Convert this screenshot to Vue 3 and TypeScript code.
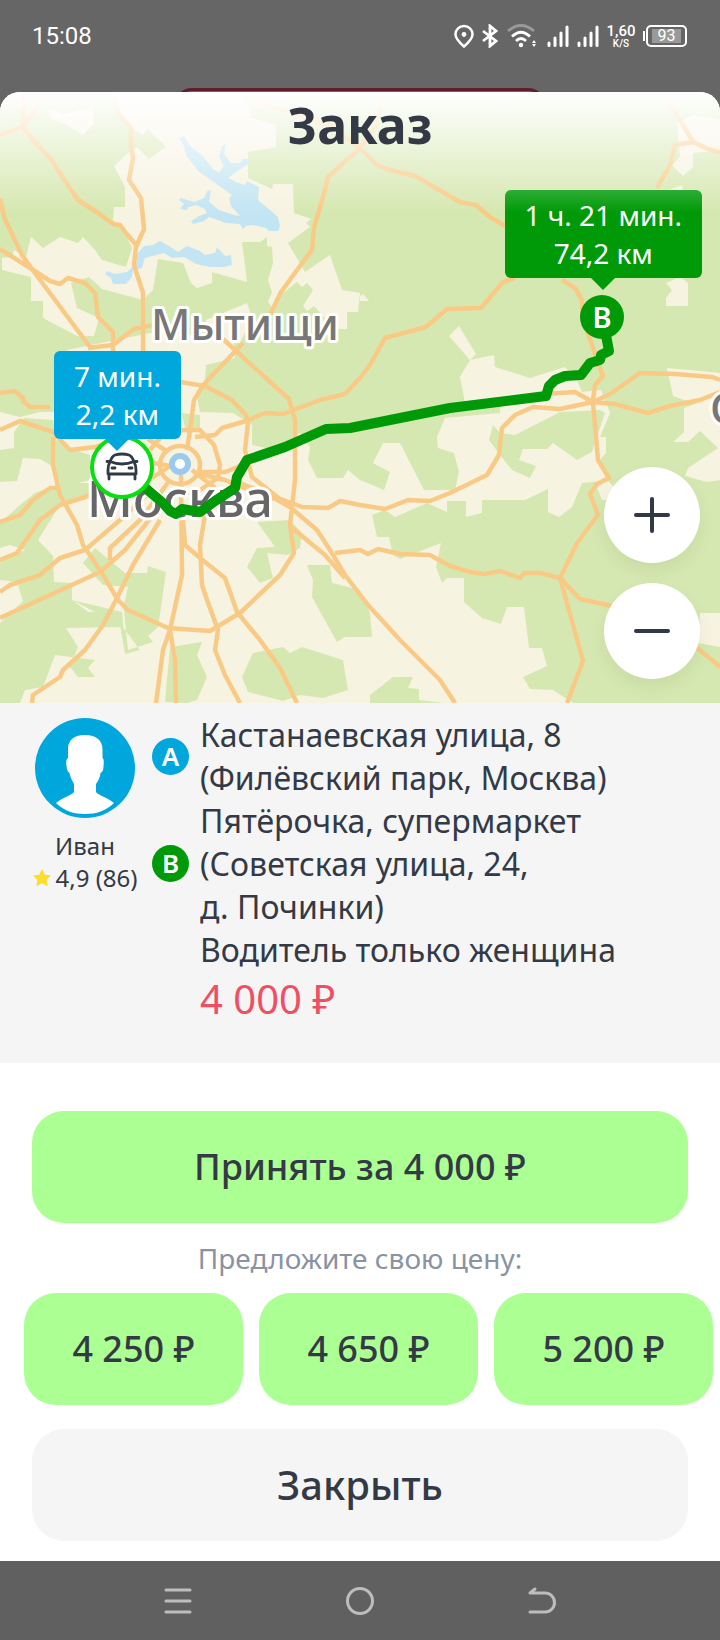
<script setup lang="ts">
interface Stop { id: string; letter: string; lines: string[] }

const woodlandGaps: string[] = [
  '113,92 117,107 130,127 143,135 148,129 166,147 149,159 137,147 128,153 114,166 125,187 125,207 114,207 113,220 122,227 132,248 126,267 102,260 95,250 83,237 78,243 60,237 43,248 31,237 26,257 14,250 12,257 2,258 2,270 31,277 31,301 43,301 43,318 77,336 94,336 99,318 77,308 71,283 89,277 102,289 143,300 153,290 158,259 183,263 191,283 197,288 212,283 212,272 247,282 242,242 260,242 267,237 267,246 272,247 273,263 268,280 272,292 268,302 273,308 283,293 297,282 302,287 307,283 313,290 303,306 307,311 314,306 335,329 347,329 347,312 358,312 360,293 342,290 330,255 305,272 288,243 310,227 306,223 311,219 294,213 293,184 273,184 272,189 248,178 248,152 276,147 276,125 252,118 247,103 233,92',
  '48,108 63,114 93,107 94,124 83,135 67,125 50,118',
  '206,320 247,303 252,318 240,343 206,343',
  '67,350 150,333 233,336 235,358 206,365 205,380 196,392 200,412 233,413 252,425 252,445 276,450 300,433 310,447 308,460 317,478 343,478 348,470 360,480 384,490 390,472 373,463 383,443 400,443 424,490 455,490 459,472 454,453 438,448 437,437 445,418 477,415 500,413 500,405 465,403 460,377 470,360 449,336 459,326 476,354 470,360 494,355 495,367 530,378 565,367 577,380 582,392 601,390 610,413 600,437 606,437 606,453 600,460 610,480 582,483 572,507 559,517 548,512 548,489 525,500 482,500 482,513 466,517 466,501 447,501 447,512 427,503 395,517 385,510 372,515 377,537 389,537 393,555 400,559 441,543 436,567 442,583 447,578 464,578 464,602 482,618 501,624 507,607 524,607 529,648 542,648 547,666 523,677 530,689 553,690 573,703 0,703 0,412 20,417 40,412 54,412',
  '684,408 720,395 720,480 707,482 685,476 688,468 718,448 700,431 688,442 673,442 684,432',
  '667,368 720,373 720,405 690,402 673,396',
  '666,283 680,277 688,283 688,306 666,306 666,298 672,290',
  '700,613 720,613 720,647 698,643',
  '677,123 693,115 720,120 720,150 693,153 693,167 683,176 672,165 680,157',
  '668,190 682,185 683,192 668,195',
  '360,296 363,294 369,301 360,301',
  '597,487 607,480 614,487 612,500 602,500'
]

const woodland: string[] = [
  '493,425 500,433 515,435 560,412 600,410 605,413 592,452 577,460 553,443 547,449 523,449 519,460 536,466 530,478 512,470 500,455 489,440',
  '0,450 14,448 14,432 24,418 53,420 56,440 75,450 90,455 90,480 62,487 52,466 40,459 23,458 17,481 0,482',
  '181,413 200,415 200,430 187,434',
  '0,523 20,505 35,493 62,483 95,483 85,500 63,500 38,540 53,556 54,582 72,583 72,600 88,612 122,612 123,627 66,628 78,647 70,667 78,677 95,677 88,668 95,660 55,655 43,687 25,690 20,703 0,703 0,623 23,601 17,582 0,580 0,560 25,550 10,545 0,548',
  '72,600 122,612 123,600 128,650 153,642 148,636 158,627 162,600 166,572 148,566 147,573 125,573 95,548 83,563 103,585 128,587 122,612 123,627 140,650 125,654 120,625',
  '170,647 202,642 197,655 207,677 197,700 187,703 165,702',
  '253,653 283,647 290,653 302,647 343,660 348,690 323,698 300,695 283,701 248,692 242,677',
  '257,548 275,547 257,522 290,520 302,533 300,548 288,555 267,553 273,578 260,583 247,567',
  '307,565 330,565 332,583 360,590 370,613 372,637 345,637 337,642 312,597 313,580',
  '370,695 393,677 413,677 408,688 419,689 419,700 443,703 370,703'
]

const water: string[] = [
  '179,138 184,136 191,147 202,155 213,169 223,175 236,182 245,185 247,181 259,187 258,200 278,217 280,226 278,231 269,231 266,228 253,225 246,226 243,229 240,224 226,223 218,220 209,217 204,221 193,224 191,221 199,216 207,213 205,209 196,205 188,207 187,210 180,209 184,204 179,200 181,198 194,202 204,198 208,190 211,191 209,202 219,210 234,215 240,216 231,206 229,198 232,195 215,183 198,171 186,155 184,146',
  '222,146 226,144 224,154 231,163 240,163 243,159 249,159 248,164 236,172 228,178 216,176 224,166 219,157',
  '137,254 144,246 153,245 160,241 169,246 178,252 187,246 200,251 205,255 215,253 217,247 225,256 231,255 232,265 224,267 210,267 196,264 184,257 172,258 164,253 145,258 142,268 133,270 132,277 126,284 113,284 111,278 105,274 107,271 115,274 127,272 137,262'
]

const roads: string[] = [
  'M25,93 L22,127 L0,135', 'M42,95 L34,112 L22,127 L36,143 L53,162 L63,178 L78,200 L98,213 L113,224 L120,225 L126,233 L137,246',
  'M115,97 L118,113 L131,128 L131,147 L133,158 L129,180 L141,198 L144,229 L136,247 L134,265 L143,293 L143,355',
  'M0,198 L4,217 L22,255 L32,269 L90,347', 'M0,249 L27,266 L50,281 L60,284 L68,278 L85,283 L95,293 L98,317 L113,332 L113,352',
  'M88,348 L113,345 L134,329 L153,325', 'M249,100 L330,125 L360,148 L328,177 L325,190 L314,228 L312,250 L300,266 L281,292 L270,315',
  'M382,100 L376,125 L360,148 L377,165 L390,170 L415,176 L460,202 L476,205 L490,217 L505,226',
  'M223,339 L290,400', 'M243,343 L225,362 L205,383 L194,400 L190,430 L187,450', 'M180,382 L205,386 L232,400 L246,415 L248,423',
  'M195,437 L215,435 L222,428 L246,421 L265,413 L283,414 L320,400 L345,394 L360,378 L370,365 L385,338 L400,334 L426,327 L447,309 L481,308 L503,282 L515,278',
  'M562,280 L575,288 L582,300 L583,320 L592,345 L596,357 L603,376 L595,385 L593,400',
  'M545,394 L575,392 L593,402 L610,394 L640,373 L675,374 L712,377 L720,380',
  'M720,392 L700,400 L670,406 L648,413 L615,404 L593,402 L560,409 L533,407 L515,415 L502,428 L499,455 L487,475 L450,493 L430,501 L408,500 L385,509 L360,505 L340,501 L328,508 L302,507 L270,495 L232,480',
  'M593,402 L598,460 L609,478 L597,484 L590,494 L598,515 L577,543 L560,578 L540,573 L524,573 L520,578 L500,571 L485,574 L470,572 L450,566 L430,555 L400,554 L378,549 L368,554 L360,550 L335,553',
  'M560,578 L580,599 L612,606', 'M560,578 L583,661 L567,703', 'M697,648 L712,660 L720,667',
  'M272,497 L290,507 L317,530 L330,550 L345,575 L368,605 L400,640 L440,680 L455,703',
  'M667,98 L693,142 L706,148 L720,153', 'M693,142 L675,145 L670,165 L657,188',
  'M53,437 L53,465 L60,495 L77,525 L83,545 L100,570 L118,600 L128,610 L168,628 L210,631 L240,613 L280,575 L294,553 L290,525 L295,480 L295,420 L288,396',
  'M150,450 L165,432 L185,430 L200,430 L214,445 L220,465 L218,478 L200,490 L175,495', 'M160,465 a20,19 0 1 0 40,0 a20,19 0 1 0 -40,0',
  'M148,439 L168,452', 'M148,462 L170,466 L152,478', 'M200,472 L225,472 L248,463', 'M248,423 L245,450 L252,477 L290,507', 'M196,473 L225,480 L273,500',
  'M192,470 L215,488', 'M181,475 L182,575 L170,630', 'M22,400 L30,407 L50,407', 'M0,393 L15,391 L25,400',
  'M0,430 L20,421 L53,432 L70,450 L95,447 L112,443', 'M0,522 L20,515 L33,500 L50,488 L57,488', 'M0,560 L17,553 L40,520 L60,505 L85,497 L120,485',
  'M0,592 L10,585 L40,575 L60,558 L85,550 L120,520 L150,492', 'M0,618 L100,572 L125,550 L165,500', 'M110,560 L110,548 L140,520 L170,480',
  'M160,520 L133,565 L116,600 L103,625 L85,650 L63,670 L60,677 L33,695 L32,703', 'M170,630 L163,650 L156,703', 'M170,630 L175,660 L176,703',
  'M183,520 L185,545 L200,558 L225,578 L237,612 L260,640 L280,668 L297,703', 'M205,515 L200,545 L202,585 L207,600 L218,630 L215,650 L225,675 L240,703', 'M291,527 L325,555 L345,578'
]

const stops: Stop[] = [
  { id: 'a', letter: 'A', lines: ['Кастанаевская улица, 8', '(Филёвский парк, Москва)'] },
  { id: 'b', letter: 'B', lines: ['Пятёрочка, супермаркет', '(Советская улица, 24,', 'д. Починки)'] }
]
const offers: string[] = ['4 250 ₽', '4 650 ₽', '5 200 ₽']
</script>

<template>
  <div class="screen">
    <header class="status">
      <time>15:08</time>
      <div class="indicators">
        <svg class="pin" viewBox="0 0 20 24"><path d="M10 2a8.500 8.500 0 0 0-8.500 8.500C1.500 15 6 19 10 22.500c4-3.500 8.500-7.500 8.500-12A8.500 8.500 0 0 0 10 2z" fill="none" stroke="#fff" stroke-width="2.500" /><circle cx="10" cy="10.500" r="2.400" fill="#fff" /></svg>
        <svg class="bt" viewBox="0 0 18 24"><path d="M2 7l13 10-6 5V2l6 5L2 17" fill="none" stroke="#fff" stroke-width="2.800" /></svg>
        <svg class="wifi" viewBox="0 0 30 24"><g fill="none" stroke="#fff" stroke-width="2.800"><path d="M1 7q13-11 26 0" stroke="#999" /><path d="M5 12.500q9-8.500 18 0" /><path d="M9 17q5-5 10 0" /></g><circle cx="14" cy="21" r="2.200" fill="#fff" /><path d="M25 19l2-3 2 3zM25 20l2 3 2-3z" fill="#fff" /></svg>
        <svg v-for="n in 2" :key="n" class="bars" viewBox="0 0 22 24"><path d="M2 19v2.500M8 14v7.500M14 9v12.500M20 3v18.500" stroke="#fff" stroke-width="3" stroke-linecap="round" /></svg>
        <div class="speed"><span>1,60</span><small>K/S</small></div>
        <div class="battery"><span>93</span></div>
      </div>
    </header>
    <div class="behind"></div>

    <main class="sheet">
      <section class="map">
        <svg class="canvas" viewBox="0 92 720 611" preserveAspectRatio="xMidYMid slice" role="img" aria-label="Маршрут">
          <rect y="92" width="720" height="611" fill="#d6e8b1" />
          <polygon v-for="p in woodlandGaps" :key="p" :points="p" fill="#f7f3e1" />
          <polygon v-for="p in woodland" :key="p" :points="p" fill="#d6e8b1" />
          <polygon v-for="p in water" :key="p" :points="p" fill="#c3e5f3" />
          <g fill="none" stroke="#f9ca86" stroke-width="4.500" stroke-linejoin="round"><path v-for="r in roads" :key="r" :d="r" /></g>
          <circle cx="180" cy="464" r="8" fill="#fff" stroke="#9ccaec" stroke-width="6" />
          <g class="towns">
            <text x="151" y="340" font-size="43">Мытищи</text>
            <text x="87" y="517" font-size="50" fill="#666">Москва</text>
            <text x="710" y="424" font-size="44">О</text>
          </g>
          <path d="M143,486 L150,492 L163,503 L170,511 L176,514 L182,509 L200,512 L215,501 L235,488 L237,477 L247,460 L285,447 L326,429 L350,428 L450,408 L546,396 L549,386 L555,380 L565,376 L581,375 L590,363 L600,360 L601,355 L609,351 L605,330" fill="none" stroke="#009a08" stroke-width="10" stroke-linejoin="round" />
          <circle cx="122" cy="467" r="30" fill="#fff" stroke="#08de10" stroke-width="4" />
          <g fill="none" stroke="#303945" stroke-width="2.800" stroke-linecap="round" stroke-linejoin="round">
            <path d="M110 462q2-6 5-7 7-2 14 0 3 1 5 7M107 461.500h3q12 5 24 0h3M110 462q-2 3-2 8v4h28v-4q0-5-2-8M109 474v5M135 474v5M112 468h3M129 468h3" />
          </g>
          <circle cx="602" cy="317" r="22" fill="#009a08" />
          <text x="602" y="328" class="pinletter">B</text>
        </svg>
        <div class="tip tip-near">7 мин.<br />2,2 км</div>
        <div class="tip tip-far">1 ч. 21 мин.<br />74,2 км</div>
        <div class="fade"><h1>Заказ</h1></div>
        <div class="zoom">
          <button type="button" aria-label="Приблизить"><svg viewBox="0 0 36 36"><path d="M2 18h32M18 2v32" /></svg></button>
          <button type="button" aria-label="Отдалить"><svg viewBox="0 0 36 36"><path d="M2 18h32" /></svg></button>
        </div>
      </section>

      <section class="details">
        <div class="person">
          <svg class="avatar" viewBox="0 0 100 100"><circle cx="50" cy="50" r="50" fill="#00a7dd" /><path d="M50 17c-12 0-17 6-17 14v9c-2 1-2 4-1.500 8 .3 4 1.500 6 3 7 1 5 3 8 4.500 11v8c-2 3-12 6-18 11 8 8 18 11 29 11s21-3 29-11c-6-5-16-8-18-11v-8c2-3 4-6 4.500-11 2-1 3-3 3-7 .5-4 .5-7-1-8v-9c0-8-6-14-17.500-14z" fill="#fff" /></svg>
          <span>Иван</span>
          <span class="rating"><svg viewBox="0 0 18 18"><path d="M9 1l2.400 5.300 5.800.6-4.300 3.900 1.200 5.700L9 13.600l-5.100 2.900 1.200-5.700L.8 6.900l5.800-.6z" fill="#ffdc26" stroke="#ffdc26" stroke-linejoin="round" /></svg>4,9 (86)</span>
        </div>
        <div class="trip">
          <div v-for="s in stops" :key="s.id" class="stop">
            <b class="badge" :class="s.id">{{ s.letter }}</b>
            <p><template v-for="l in s.lines" :key="l">{{ l }}<br /></template></p>
          </div>
          <p class="note">Водитель только женщина</p>
          <p class="price">4 000 ₽</p>
        </div>
      </section>

      <section class="actions">
        <button type="button" class="accept">Принять за 4 000 ₽</button>
        <p class="hint">Предложите свою цену:</p>
        <div class="offers"><button v-for="o in offers" :key="o" type="button">{{ o }}</button></div>
        <button type="button" class="close">Закрыть</button>
      </section>
    </main>

    <nav class="nav">
      <button type="button" aria-label="Меню"><svg viewBox="0 0 32 32"><path d="M4 5h24M4 16h24M4 27h24" /></svg></button>
      <button type="button" aria-label="Домой"><svg viewBox="0 0 32 32"><circle cx="16" cy="16" r="12.500" /></svg></button>
      <button type="button" aria-label="Назад"><svg viewBox="0 0 32 32"><path d="M9 4L4 8h15a9.500 9.500 0 0 1 0 19H4" /></svg></button>
    </nav>
  </div>
</template>

<style>
body { margin: 0; background: #666; }
</style>

<style scoped>
.screen { position: relative; display: flex; flex-direction: column; min-height: 100vh; background: #666; color: #343a45; font-family: "Noto Sans", "Open Sans", sans-serif; }
button { border: 0; padding: 0; font: inherit; color: inherit; cursor: pointer; }
p, h1 { margin: 0; }
svg { display: block; }
.status { display: flex; align-items: center; justify-content: space-between; box-sizing: border-box; height: 92px; padding: 0 33px 20px 32px; color: #fff; font-family: Roboto, sans-serif; }
.status time { font-size: 24px; }
.indicators { display: flex; align-items: center; height: 24px; }
.pin { width: 20px; height: 24px; margin-right: 7px; }
.bt { width: 18px; height: 24px; margin-right: 8px; }
.wifi { width: 30px; height: 24px; margin-right: 10px; }
.bars { width: 22px; height: 24px; margin-right: 8px; }
.speed { display: flex; flex-direction: column; align-items: center; width: 28px; margin-right: 11px; font-size: 15px; line-height: 15px; font-weight: 500; }
.speed small { font-size: 10px; line-height: 10px; }
.battery { position: relative; box-sizing: border-box; width: 41px; height: 22px; padding: 2px 4px; border: 2px solid #fff; border-radius: 5px; font-size: 16px; line-height: 14px; text-align: center; }
.battery span { display: block; background: #999; }
.battery::before { content: ""; position: absolute; left: -5px; top: 4px; width: 2px; height: 10px; background: #fff; }
.behind { position: absolute; top: 88px; left: 24%; right: 24%; height: 32px; border: 3px solid #601d2b; border-radius: 32px; }
.sheet { position: relative; flex: 1; background: #fff; border-radius: 20px 20px 0 0; }
.map { position: relative; height: 611px; overflow: hidden; border-radius: 20px 20px 0 0; }
.canvas { width: 100%; height: 100%; }
.towns { font-weight: 500; fill: #777; stroke: #fff; stroke-width: 6px; stroke-linejoin: round; paint-order: stroke; }
.pinletter { font-size: 29px; font-weight: 600; fill: #fff; text-anchor: middle; }
.tip { position: absolute; padding: 6px 20px; border-radius: 6px; color: #fff; font-size: 28px; line-height: 38px; text-align: center; white-space: nowrap; }
.tip::after { content: ""; position: absolute; left: 50%; top: 100%; margin-left: -12px; border: 12px solid transparent; border-bottom: 0; }
.tip-near { left: 54px; top: 259px; background: #00a7dd; }
.tip-near::after { border-top-color: #00a7dd; }
.tip-far { right: 18px; top: 98px; background: #009a08; }
.tip-far::after { border-top-color: #009a08; }
.fade { position: absolute; inset: 0 0 auto; height: 120px; background: linear-gradient(#fff, rgba(255, 255, 255, 0)); }
h1 { font-size: 50px; line-height: 66px; text-align: center; }
.zoom { position: absolute; right: 20px; bottom: 24px; display: grid; gap: 20px; }
.zoom button { display: grid; place-items: center; width: 96px; height: 96px; border-radius: 50%; background: #fff; box-shadow: 0 8px 16px rgba(60, 80, 20, 0.08); }
.zoom svg { width: 36px; height: 36px; fill: none; stroke: #303945; stroke-width: 4; stroke-linecap: round; }
.details { display: flex; box-sizing: border-box; min-height: 360px; padding: 10px 16px 32px 24px; background: #f5f5f5; }
.person { display: flex; flex-direction: column; align-items: center; width: 122px; padding-top: 5px; font-size: 24px; line-height: 32px; }
.avatar { width: 100px; height: 100px; margin-bottom: 12px; }
.rating { display: flex; align-items: center; gap: 5px; white-space: nowrap; }
.rating svg { width: 18px; height: 18px; }
.trip { flex: 1; padding-left: 6px; font-size: 32px; line-height: 43px; }
.stop { display: flex; align-items: center; gap: 11px; }
.badge { flex: none; width: 37px; height: 37px; border-radius: 50%; color: #fff; font-size: 26px; font-weight: 600; line-height: 37px; text-align: center; }
.badge.a { background: #00a7dd; }
.badge.b { background: #009a08; }
.note, .price { padding-left: 48px; }
.price { font-size: 40px; line-height: 56px; color: #ef4f63; }
.actions { display: flex; flex-direction: column; padding: 48px 32px 20px; }
.accept, .offers button, .close { height: 112px; padding-bottom: 2px; border-radius: 32px; background: #acff92; font-size: 36px; font-weight: 500; }
.hint { font-size: 28px; line-height: 38px; padding: 16px 0; text-align: center; color: #8a93a1; }
.offers { display: grid; grid-template-columns: repeat(3, 1fr); gap: 16px; margin: 0 -25px 24px -8px; }
.close { background: #f5f5f5; font-size: 40px; }
.nav { display: grid; grid-template-columns: repeat(3, 1fr); place-items: center; height: 80px; padding: 0 12%; background: #606060; }
.nav button { width: 32px; height: 32px; background: none; }
.nav svg { width: 32px; height: 32px; fill: none; stroke: #bdbdbd; stroke-width: 3; stroke-linecap: round; stroke-linejoin: round; }
</style>
